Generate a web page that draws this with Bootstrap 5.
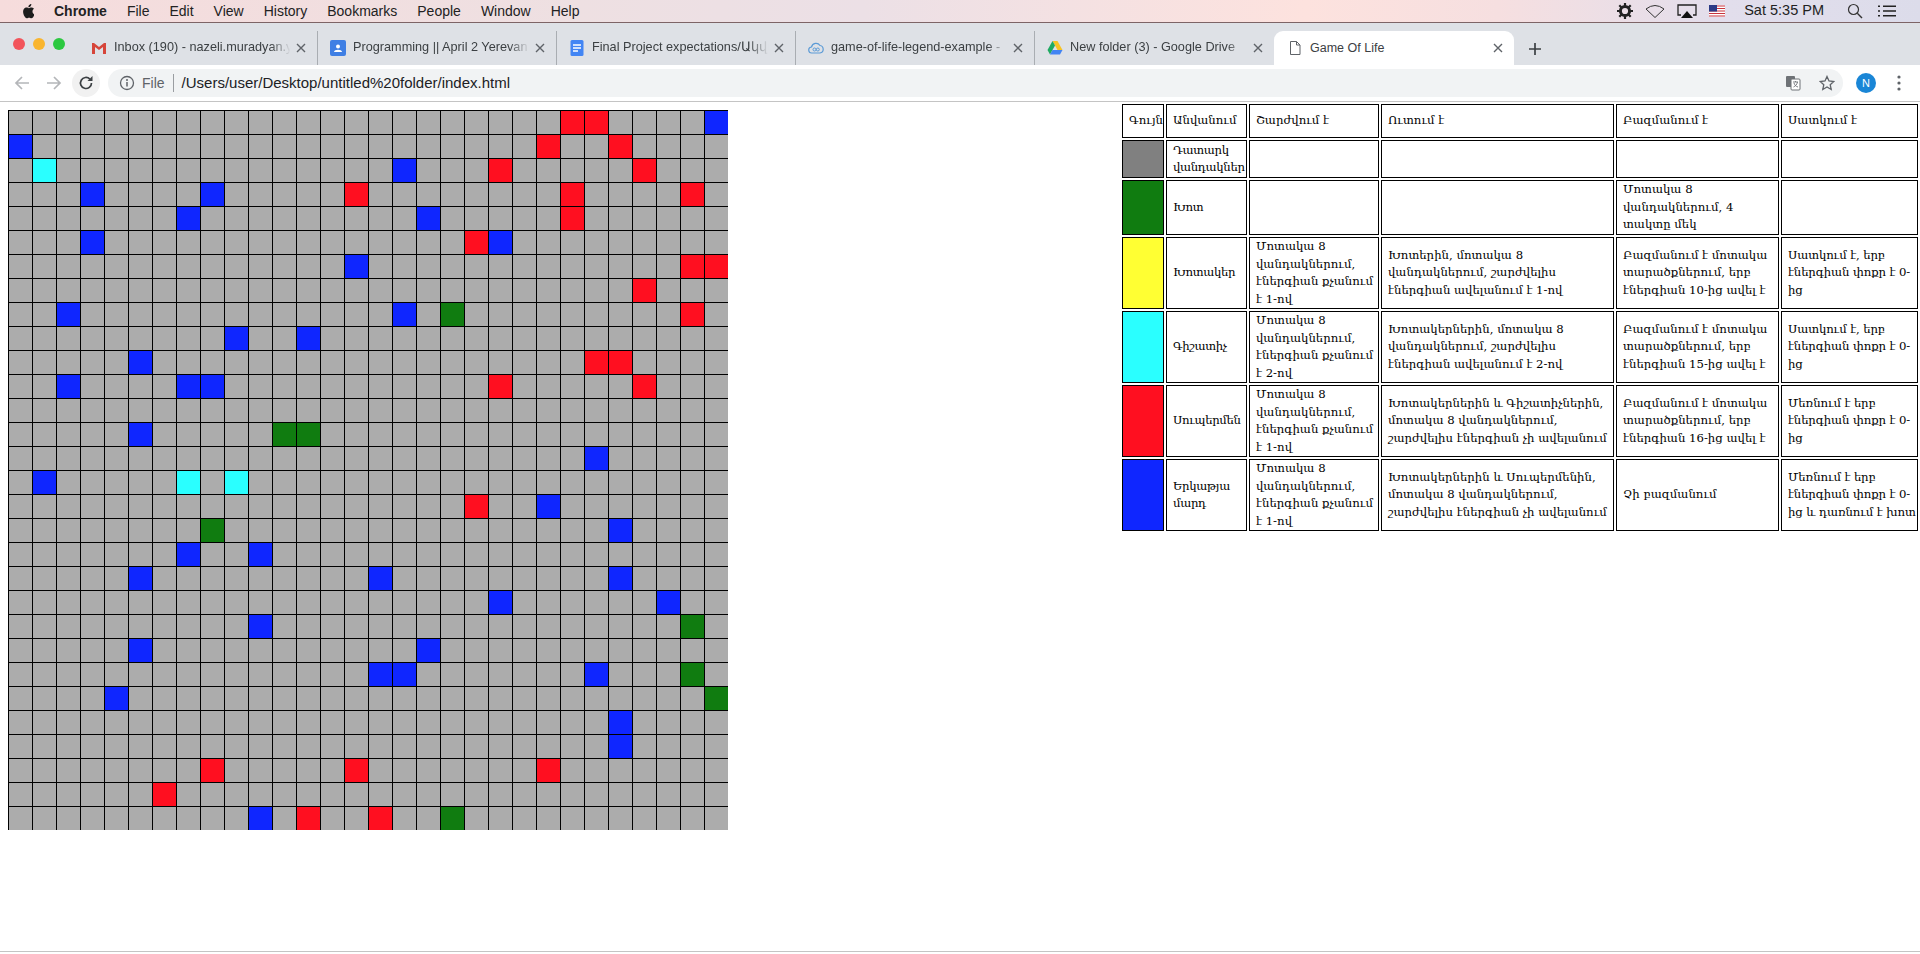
<!DOCTYPE html>
<html lang="hy">
<head>
  <meta charset="UTF-8">
  <title>Game Of Life</title>
  <link href="https://cdn.jsdelivr.net/npm/bootstrap@5.3.0/dist/css/bootstrap.min.css" rel="stylesheet">
  <style>
    html, body { height: 954px; overflow: hidden; }
    body { font-family: "Liberation Sans", Arial, sans-serif; background: #fff; color: #000; }

    /* mac menu bar */
    .mac-bar { height: 23px; font-size: 14px; color: #222; padding-left: 21px; padding-right: 24px;
      background: linear-gradient(90deg, #f6dcdc 0%, #eee0e2 30%, #ece0e6 45%, #fde2de 68%, #f6dfe0 78%, #e2deec 90%, #dcdcea 100%);
      border-bottom: 1px solid #7d6466; }
    .mac-bar b { margin-left: 20px; margin-right: 20px; }
    .mac-bar .menu-item { margin-right: 20px; }
    .mac-tray { gap: 12px; font-size: 14.5px; }
    .tray-time { margin-left: 7px; }
    .tray-search { margin-left: 11px; }
    .tray-list { margin-left: 3px; }

    /* tab strip */
    .tab-strip { height: 42px; background: #dee1e6; padding-top: 8px; padding-left: 79px; position: relative; }
    .win-dot { position: absolute; top: 15px; width: 12px; height: 12px; border-radius: 50%; }
    .dot-r { left: 13px; background: #f2545b; }
    .dot-y { left: 33px; background: #f9b52f; }
    .dot-g { left: 53px; background: #2cc840; }
    .tab-item { width: 239px; height: 34px; padding-left: 12px; padding-right: 11px; font-size: 12.7px; color: #3c4043; border-right: 1px solid #a9adb2; background-clip: content-box; }
    .tab-item.no-sep { border-right: 0; }
    .tab-item.tab-on { width: 240px; background: #fff; border-radius: 9px 9px 0 0; padding-left: 13px; font-size: 12.5px; }
    .tab-ico { flex: 0 0 16px; width: 16px; height: 16px; margin-right: 7px; }
    .tab-name { flex: 0 0 182px; overflow: hidden; white-space: nowrap;
      -webkit-mask-image: linear-gradient(90deg, #000 86%, transparent 97%); mask-image: linear-gradient(90deg, #000 86%, transparent 97%); }
    .tab-on .tab-name { -webkit-mask-image: none; mask-image: none; }
    .tab-x { margin-left: auto; width: 10px; height: 10px; }
    .tab-plus { width: 14px; height: 14px; margin: 2px 0 0 14px; align-self: center; }

    /* toolbar */
    .tool-bar { height: 37px; background: #fff; border-bottom: 1px solid #c4c4c4; padding-left: 14px; }
    .tool-btn { width: 28px; height: 28px; border-radius: 50%; }
    .reload-btn { background: #f1f1f1; margin-left: 10px; }
    .omni-box { width: 1735px; height: 28px; background: #f1f3f4; border-radius: 14px; margin-left: 8px; padding: 0 8px 0 11px; font-size: 15px; color: #202124; }
    .omni-file { color: #5f6368; margin-left: 7px; font-size: 14px; }
    .omni-sep { width: 1px; height: 18px; background: #9a9da1; margin: 0 8px; }
    .avatar-dot { width: 20px; height: 20px; border-radius: 50%; background: #1a86d6; color: #fff; font-size: 11px; margin-left: 13px; }
    .menu-dots { margin-left: 21px; }
    .star-ico { margin-left: 18px; }

    /* board and legend */
    .page-main { height: 849px; }
    .life-board { display: grid; grid-template-columns: repeat(30, 24px); grid-auto-rows: 24px; margin: 8px 0 0 8px; width: 720px; height: 720px; }
    .life-cell { background: #acacac; border-left: 1px solid #000; border-top: 1px solid #000; }
    .c-blue { background: #0f26ff; }
    .c-red { background: #ff0f20; }
    .c-cyan { background: #2affff; }
    .c-green { background: #107c10; }
    .c-yellow { background: #ffff33; }
    .c-gray { background: #808080; }

    .legend-tbl { border-collapse: separate; border-spacing: 2px; table-layout: fixed; width: 800px; height: 431px; margin: 0; font-family: "DejaVu Serif", "DejaVu Sans", serif; font-size: 11.7px; line-height: 17.5px; }
    .legend-tbl td, .legend-tbl th { border: 1px solid #000; padding: 0 0 0 6px; font-weight: 400; white-space: nowrap; vertical-align: middle; }
    .legend-tbl th { text-align: left; }
    .legend-tbl td:nth-child(2) { letter-spacing: -.35px; }
    .legend-tbl td:nth-child(6) { letter-spacing: -.12px; }
    .r-head { height: 34px; }
    .r-gray { height: 38px; }
    .r-green { height: 55px; }
    .r-big { height: 72px; }

    .w-color { width: 42px; }
    .w-name { width: 81px; }
    .w-move { width: 130px; }
    .w-eat { width: 233px; }
    .w-breed { width: 163px; }
    .w-die { width: 137px; }

    .page-end { height: 3px; border-top: 1px solid #c4c4c4; }
  </style>
</head>
<body class="d-flex flex-column">

  <!-- Menu bar -->
  <div class="mac-bar d-flex align-items-center">
    <svg width="13" height="16" viewBox="0 0 170 200" fill="#1d1d1d"><path d="M150 106c0-22 18-33 19-34-10-15-26-17-32-17-14-1-27 8-34 8s-18-8-30-8c-15 0-30 9-38 23-16 28-4 70 12 93 8 11 17 24 29 23 12 0 16-7 30-7s18 7 30 7 20-11 28-23c9-13 12-25 13-26-1 0-27-10-27-39zM126 37c6-8 11-19 9-30-9 0-21 6-28 14-6 7-12 18-10 29 10 1 21-5 29-13z"/></svg>
    <b>Chrome</b>
    <span class="menu-item">File</span>
    <span class="menu-item">Edit</span>
    <span class="menu-item">View</span>
    <span class="menu-item">History</span>
    <span class="menu-item">Bookmarks</span>
    <span class="menu-item">People</span>
    <span class="menu-item">Window</span>
    <span class="menu-item">Help</span>
    <div class="mac-tray d-flex align-items-center ms-auto">
      <svg width="16" height="16" viewBox="0 0 16 16"><circle cx="8" cy="8" r="4.6" fill="none" stroke="#222" stroke-width="3"/><path d="M8 0v3M8 13v3M0 8h3M13 8h3M2.3 2.3l2.2 2.2M11.500 11.500l2.200 2.200M13.700 2.300l-2.200 2.200M4.500 11.500l-2.200 2.200" stroke="#222" stroke-width="2.200"/></svg>
      <svg width="20" height="14" viewBox="0 0 20 14"><path d="M1 5 Q10 -2 19 5 L10 13.500Z" fill="none" stroke="#333" stroke-width="1"/></svg>
      <svg width="20" height="15" viewBox="0 0 20 15"><path d="M4 11H1V1h18v10h-3" fill="none" stroke="#222" stroke-width="1.300"/><path d="M10 7l6 7H4z" fill="#111"/></svg>
      <svg width="16" height="12" viewBox="0 0 16 12"><rect width="16" height="12" fill="#fff"/><path d="M0 1h16M0 3.500h16M0 6h16M0 8.500h16M0 11h16" stroke="#c8333c" stroke-width="1.200"/><rect width="8" height="6.500" fill="#2b3a87"/></svg>
      <span class="tray-time">Sat 5:35 PM</span>
      <svg class="tray-search" width="16" height="16" viewBox="0 0 16 16"><circle cx="6.500" cy="6.500" r="5" fill="none" stroke="#333" stroke-width="1.200"/><path d="M10.300 10.300L15 15" stroke="#333" stroke-width="1.400"/></svg>
      <svg class="tray-list" width="18" height="12" viewBox="0 0 18 12"><path d="M5 1.200h13M5 6h13M5 10.800h13M0 1.200h2M0 6h2M0 10.800h2" stroke="#222" stroke-width="1.600"/></svg>
    </div>
  </div>

  <!-- Tabs -->
  <div class="tab-strip d-flex">
    <span class="win-dot dot-r"></span><span class="win-dot dot-y"></span><span class="win-dot dot-g"></span>
    <div class="tab-item d-flex align-items-center">
      <svg class="tab-ico" viewBox="0 0 16 16"><path d="M1 3v11h3V7l4 3 4-3v7h3V3h-2L8 7 3 3z" fill="#d6453a"/></svg>
      <span class="tab-name">Inbox (190) - nazeli.muradyan.y</span>
      <svg class="tab-x" viewBox="0 0 10 10"><path d="M1 1l8 8M9 1l-8 8" stroke="#5f6368" stroke-width="1.400"/></svg>
    </div>
    <div class="tab-item d-flex align-items-center">
      <svg class="tab-ico" viewBox="0 0 16 16"><rect width="16" height="16" rx="2" fill="#3f7fe4"/><circle cx="8" cy="6.500" r="2" fill="#fff"/><path d="M4 12c0-3 8-3 8 0z" fill="#fff"/></svg>
      <span class="tab-name">Programming || April 2 Yerevan</span>
      <svg class="tab-x" viewBox="0 0 10 10"><path d="M1 1l8 8M9 1l-8 8" stroke="#5f6368" stroke-width="1.400"/></svg>
    </div>
    <div class="tab-item d-flex align-items-center">
      <svg class="tab-ico" viewBox="0 0 16 16"><rect x="1.500" width="13" height="16" rx="1.500" fill="#4285f4"/><path d="M4 5h8M4 8h8M4 11h5" stroke="#fff" stroke-width="1.500"/></svg>
      <span class="tab-name">Final Project expectations/Ակվա</span>
      <svg class="tab-x" viewBox="0 0 10 10"><path d="M1 1l8 8M9 1l-8 8" stroke="#5f6368" stroke-width="1.400"/></svg>
    </div>
    <div class="tab-item d-flex align-items-center">
      <svg class="tab-ico" viewBox="0 0 16 16"><path d="M4 13a3 3 0 0 1-.5-6A4.700 4.700 0 0 1 12 5.500a3.800 3.800 0 0 1 0 7.500z" fill="none" stroke="#5c9bd6" stroke-width="1.200"/><circle cx="6.500" cy="9.500" r="1.500" fill="none" stroke="#5c9bd6"/><circle cx="9.800" cy="9.500" r="1.500" fill="none" stroke="#5c9bd6"/></svg>
      <span class="tab-name">game-of-life-legend-example - </span>
      <svg class="tab-x" viewBox="0 0 10 10"><path d="M1 1l8 8M9 1l-8 8" stroke="#5f6368" stroke-width="1.400"/></svg>
    </div>
    <div class="tab-item no-sep d-flex align-items-center">
      <svg class="tab-ico" viewBox="0 0 16 16"><path d="M5.500 1h5l5 9h-5z" fill="#f7c325"/><path d="M5.500 1L.5 10l2.500 4.500L8 5.500z" fill="#1faa62"/><path d="M3 14.500h10l2.500-4.500H5.500z" fill="#4284f3"/></svg>
      <span class="tab-name">New folder (3) - Google Drive</span>
      <svg class="tab-x" viewBox="0 0 10 10"><path d="M1 1l8 8M9 1l-8 8" stroke="#5f6368" stroke-width="1.400"/></svg>
    </div>
    <div class="tab-item tab-on no-sep d-flex align-items-center">
      <svg class="tab-ico" viewBox="0 0 16 16"><path d="M3.500 1.500h6l3.500 3.500v9.500h-9.500zM9.500 1.500v3.500h3.500" fill="#fff" stroke="#5f6368" stroke-width="1"/></svg>
      <span class="tab-name">Game Of Life</span>
      <svg class="tab-x" viewBox="0 0 10 10"><path d="M1 1l8 8M9 1l-8 8" stroke="#5f6368" stroke-width="1.400"/></svg>
    </div>
    <svg class="tab-plus" viewBox="0 0 14 14"><path d="M7 1v12M1 7h12" stroke="#3c4043" stroke-width="1.700"/></svg>
  </div>

  <!-- Toolbar -->
  <div class="tool-bar d-flex align-items-center">
    <svg width="16" height="16" viewBox="0 0 16 16"><path d="M15 8H2M8 2L2 8l6 6" fill="none" stroke="#b4b6b9" stroke-width="1.700"/></svg>
    <svg class="ms-3" width="16" height="16" viewBox="0 0 16 16"><path d="M1 8h13M8 2l6 6-6 6" fill="none" stroke="#b4b6b9" stroke-width="1.700"/></svg>
    <div class="tool-btn reload-btn d-flex align-items-center justify-content-center">
      <svg width="16" height="16" viewBox="0 0 16 16"><path d="M13.500 8a5.500 5.500 0 1 1-1.600-3.900" fill="none" stroke="#3c4043" stroke-width="1.700"/><path d="M14.500 1v5h-5z" fill="#3c4043"/></svg>
    </div>
    <div class="omni-box d-flex align-items-center">
      <svg width="16" height="16" viewBox="0 0 16 16"><circle cx="8" cy="8" r="6.500" fill="none" stroke="#5f6368" stroke-width="1.300"/><path d="M8 7v4.500" stroke="#5f6368" stroke-width="1.500"/><circle cx="8" cy="5" r="1" fill="#5f6368"/></svg>
      <span class="omni-file">File</span>
      <span class="omni-sep"></span>
      <span>/Users/user/Desktop/untitled%20folder/index.html</span>
      <svg class="ms-auto" width="16" height="16" viewBox="0 0 16 16"><rect x="1" y="1" width="9" height="11" rx="1" fill="#6e7276"/><rect x="6" y="4" width="9" height="11" rx="1" fill="#fff" stroke="#6e7276"/><path d="M8 7h5M10.500 6v1M12.500 7c-.5 2.500-2 4-4 5M9 8c.5 2 2 3.500 4 4" stroke="#6e7276" fill="none" stroke-width=".9"/></svg>
      <svg class="star-ico" width="16" height="16" viewBox="0 0 16 16"><path d="M8 1.500l2 4.500 4.800.5-3.600 3.200 1 4.800L8 12l-4.200 2.500 1-4.800L1.200 6.500 6 6z" fill="none" stroke="#5f6368" stroke-width="1.300"/></svg>
    </div>
    <div class="avatar-dot d-flex align-items-center justify-content-center">N</div>
    <svg class="menu-dots" width="4" height="16" viewBox="0 0 4 16" fill="#5f6368"><circle cx="2" cy="2" r="1.600"/><circle cx="2" cy="8" r="1.600"/><circle cx="2" cy="14" r="1.600"/></svg>
  </div>

  <!-- Board and legend -->
  <div class="page-main d-flex justify-content-between align-items-start">
    <div class="life-board" id="board"></div>

    <table class="legend-tbl">
      <tr class="r-head"><th class="w-color">Գույն</th><th class="w-name">Անվանում</th><th class="w-move">Շարժվում է</th><th class="w-eat">Ուտում է</th><th class="w-breed">Բազմանում է</th><th class="w-die">Սատկում է</th></tr>
      <tr class="r-gray"><td class="c-gray"></td><td>Դատարկ<br>վանդակներ</td><td></td><td></td><td></td><td></td></tr>
      <tr class="r-green"><td class="c-green"></td><td>Խոտ</td><td></td><td></td><td>Մոտակա 8<br>վանդակներում, 4<br>տակտը մեկ</td><td></td></tr>
      <tr class="r-big"><td class="c-yellow"></td><td>Խոտակեր</td><td>Մոտակա 8<br>վանդակներում,<br>էներգիան քչանում<br>է 1-ով</td><td>Խոտերին, մոտակա 8<br>վանդակներում, շարժվելիս<br>էներգիան ավելանում է 1-ով</td><td>Բազմանում է մոտակա<br>տարածքներում, երբ<br>էներգիան 10-ից ավել է</td><td>Սատկում է, երբ<br>էներգիան փոքր է 0-<br>ից</td></tr>
      <tr class="r-big"><td class="c-cyan"></td><td>Գիշատիչ</td><td>Մոտակա 8<br>վանդակներում,<br>էներգիան քչանում<br>է 2-ով</td><td>Խոտակերներին, մոտակա 8<br>վանդակներում, շարժվելիս<br>էներգիան ավելանում է 2-ով</td><td>Բազմանում է մոտակա<br>տարածքներում, երբ<br>էներգիան 15-ից ավել է</td><td>Սատկում է, երբ<br>էներգիան փոքր է 0-<br>ից</td></tr>
      <tr class="r-big"><td class="c-red"></td><td>Սուպերմեն</td><td>Մոտակա 8<br>վանդակներում,<br>էներգիան քչանում<br>է 1-ով</td><td>Խոտակերներին և Գիշատիչներին,<br>մոտակա 8 վանդակներում,<br>շարժվելիս էներգիան չի ավելանում</td><td>Բազմանում է մոտակա<br>տարածքներում, երբ<br>էներգիան 16-ից ավել է</td><td>Մեռնում է երբ<br>էներգիան փոքր է 0-<br>ից</td></tr>
      <tr class="r-big"><td class="c-blue"></td><td>Երկաթյա<br>մարդ</td><td>Մոտակա 8<br>վանդակներում,<br>էներգիան քչանում<br>է 1-ով</td><td>Խոտակերներին և Սուպերմենին,<br>մոտակա 8 վանդակներում,<br>շարժվելիս էներգիան չի ավելանում</td><td>Չի բազմանում</td><td>Մեռնում է երբ<br>էներգիան փոքր է 0-<br>ից և դառնում է խոտ</td></tr>
    </table>
  </div>

  <div class="page-end"></div>

<script>
  // row -> { column: colour }
  const b = 'c-blue', r = 'c-red', c = 'c-cyan', g = 'c-green';
  const colored = [
    {23:r,24:r,29:b},
    {0:b,22:r,25:r},
    {1:c,16:b,20:r,26:r},
    {3:b,8:b,14:r,23:r,28:r},
    {7:b,17:b,23:r},
    {3:b,19:r,20:b},
    {14:b,28:r,29:r},
    {26:r},
    {2:b,16:b,18:g,28:r},
    {9:b,12:b},
    {5:b,24:r,25:r},
    {2:b,7:b,8:b,20:r,26:r},
    {},
    {5:b,11:g,12:g},
    {24:b},
    {1:b,7:c,9:c},
    {19:r,22:b},
    {8:g,25:b},
    {7:b,10:b},
    {5:b,15:b,25:b},
    {20:b,27:b},
    {10:b,28:g},
    {5:b,17:b},
    {15:b,16:b,24:b,28:g},
    {4:b,29:g},
    {25:b},
    {25:b},
    {8:r,14:r,22:r},
    {6:r},
    {10:b,12:r,15:r,18:g}
  ];

  const board = document.getElementById('board');
  colored.forEach(row => {
    for (let x = 0; x < 30; x++) {
      const cell = document.createElement('div');
      cell.className = 'life-cell' + (row[x] ? ' ' + row[x] : '');
      board.appendChild(cell);
    }
  });
</script>

<script src="https://cdn.jsdelivr.net/npm/bootstrap@5.3.0/dist/js/bootstrap.bundle.min.js"></script>
</body>
</html>
